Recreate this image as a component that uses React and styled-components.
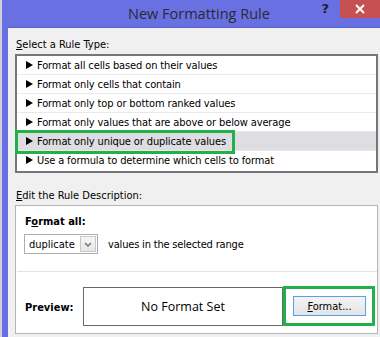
import React from 'react';
import styled, { createGlobalStyle } from 'styled-components';

const GlobalStyle = createGlobalStyle`
  html, body {
    margin: 0;
    padding: 0;
    background: #f0f0f0;
  }
  body {
    font-family: "DejaVu Sans Condensed", "Liberation Sans", Arial, sans-serif;
  }
`;

const Window = styled.div`
  width: 380px;
  height: 337px;
  box-sizing: border-box;
  display: flex;
  flex-direction: column;
  background: #6870e2;
  border-left: 2px solid #cfd0dc;
  overflow: hidden;
`;

const TitleBar = styled.div`
  display: flex;
  align-items: flex-start;
  height: 27px;
  flex-shrink: 0;
`;

const Title = styled.div`
  flex: 1;
  padding-left: 126px;
  line-height: 27px;
  font-family: "Open Sans", "Noto Sans", sans-serif;
  font-size: 14.5px;
  color: #2a2a33;
  white-space: nowrap;
`;

const Help = styled.div`
  margin: 3px 11px 0 0;
  font-family: "DejaVu Sans", sans-serif;
  font-size: 13px;
  font-weight: bold;
  line-height: 12px;
  color: #22222c;
`;

const CloseButton = styled.div`
  width: 40px;
  height: 18px;
  background: #c75050;
  display: flex;
  align-items: center;
  justify-content: center;
`;

const Client = styled.div`
  flex: 1;
  margin-left: 6px;
  background: #f0f0f0;
  border-top: 1px solid #5b63d3;
  padding: 9px 2px 0 7px;
  font-size: 11px;
  color: #000;
`;

const Label = styled.div`
  line-height: 15px;
  margin: ${({ $top }) => $top || 0}px 0 0 1px;
  white-space: nowrap;
`;

const ListBox = styled.div`
  margin-top: 2px;
  border: 2px solid #74767c;
  background: #fff;
  padding-bottom: 1px;
`;

const Row = styled.div`
  position: relative;
  display: flex;
  align-items: center;
  height: 18px;
  padding-left: 9px;
  letter-spacing: -0.12px;
  border-bottom: 1px solid ${({ $last }) => ($last ? 'transparent' : '#e9e9ec')};
  background: ${({ $selected }) => ($selected ? '#dddde2' : '#fff')};
  white-space: nowrap;
`;

const Arrow = styled.svg`
  width: 7px;
  height: 8px;
  margin-right: 4px;
  flex-shrink: 0;
`;

const Highlight = styled.div`
  position: absolute;
  left: -2px;
  top: -2px;
  width: 220px;
  height: 24px;
  box-sizing: border-box;
  border: 3px solid #22b04b;
  z-index: 1;
  pointer-events: none;
`;

const DescBox = styled.div`
  margin-top: 2px;
  height: 129px;
  box-sizing: border-box;
  border: 1px solid #b4b4b4;
  background: #fff;
  display: flex;
  flex-direction: column;
`;

const Settings = styled.div`
  padding: 8px 0 17px 9px;
`;

const Bold = styled.div`
  font-weight: bold;
  line-height: 15px;
`;

const ValueRow = styled.div`
  display: flex;
  align-items: center;
  margin-top: 5px;
`;

const Combo = styled.div`
  width: 74px;
  height: 20px;
  box-sizing: border-box;
  border: 1px solid #abadb3;
  display: flex;
  align-items: center;
  justify-content: space-between;
  padding: 0 1px 0 4px;
  margin-left: -1px;
`;

const ComboButton = styled.div`
  width: 16px;
  height: 16px;
  box-sizing: border-box;
  border: 1px solid #c9c9c9;
  background: linear-gradient(#f6f6f6, #e6e6e6);
  display: flex;
  align-items: center;
  justify-content: center;
`;

const ValueText = styled.span`
  margin-left: 10px;
  letter-spacing: -0.18px;
  white-space: nowrap;
`;

const Divider = styled.div`
  height: 1px;
  margin-left: 1px;
  background: #e3e3e3;
`;

const PreviewRow = styled.div`
  display: flex;
  align-items: center;
  padding: 14px 0 0 9px;
`;

const PreviewLabel = styled(Bold)`
  width: 58px;
  margin-top: 2px;
`;

const PreviewBox = styled.div`
  width: 200px;
  height: 39px;
  box-sizing: border-box;
  border: 1px solid #6a6a6a;
  display: flex;
  align-items: center;
  justify-content: center;
  font-family: "Open Sans", "Noto Sans", sans-serif;
  font-size: 12.5px;
  margin-top: 1px;
`;

const GreenFrame = styled.div`
  width: 92px;
  height: 40px;
  box-sizing: border-box;
  border: 3px solid #22b04b;
  padding: 7px 6px 7px 7px;
`;

const Button = styled.div`
  height: 20px;
  box-sizing: border-box;
  border: 1px solid #5aa0e8;
  background: linear-gradient(#f4f4f4, #e4e4e4);
  display: flex;
  align-items: center;
  justify-content: center;
`;

const rules = [
  'Format all cells based on their values',
  'Format only cells that contain',
  'Format only top or bottom ranked values',
  'Format only values that are above or below average',
  'Format only unique or duplicate values',
  'Use a formula to determine which cells to format',
];

const App = () => (
  <>
    <GlobalStyle />
    <Window>
      <TitleBar>
        <Title>New Formatting Rule</Title>
        <Help>?</Help>
        <CloseButton>
          <svg width="10" height="10" viewBox="0 0 10 10">
            <path d="M1 1 L9 9 M9 1 L1 9" stroke="#fff" strokeWidth="2" />
          </svg>
        </CloseButton>
      </TitleBar>
      <Client>
        <Label>
          <u>S</u>elect a Rule Type:
        </Label>
        <ListBox>
          {rules.map((r, i) => (
            <Row key={r} $selected={i === 4} $last={i === rules.length - 1}>
              {i === 4 && <Highlight />}
              <Arrow viewBox="0 0 7 8">
                <polygon points="0,0 7,4 0,8" fill="#000" />
              </Arrow>
              {r}
            </Row>
          ))}
        </ListBox>
        <Label $top={15}>
          <u>E</u>dit the Rule Description:
        </Label>
        <DescBox>
          <Settings>
            <Bold>
              F<u>o</u>rmat all:
            </Bold>
            <ValueRow>
              <Combo>
                duplicate
                <ComboButton>
                  <svg width="8" height="5" viewBox="0 0 8 5">
                    <path d="M1 1 L4 4 L7 1" stroke="#6d6d6d" strokeWidth="1.3" fill="none" />
                  </svg>
                </ComboButton>
              </Combo>
              <ValueText>values in the selected range</ValueText>
            </ValueRow>
          </Settings>
          <Divider />
          <PreviewRow>
            <PreviewLabel>Preview:</PreviewLabel>
            <PreviewBox>No Format Set</PreviewBox>
            <GreenFrame>
              <Button>
                <span>
                  <u>F</u>ormat...
                </span>
              </Button>
            </GreenFrame>
          </PreviewRow>
        </DescBox>
      </Client>
    </Window>
  </>
);

export default App;
